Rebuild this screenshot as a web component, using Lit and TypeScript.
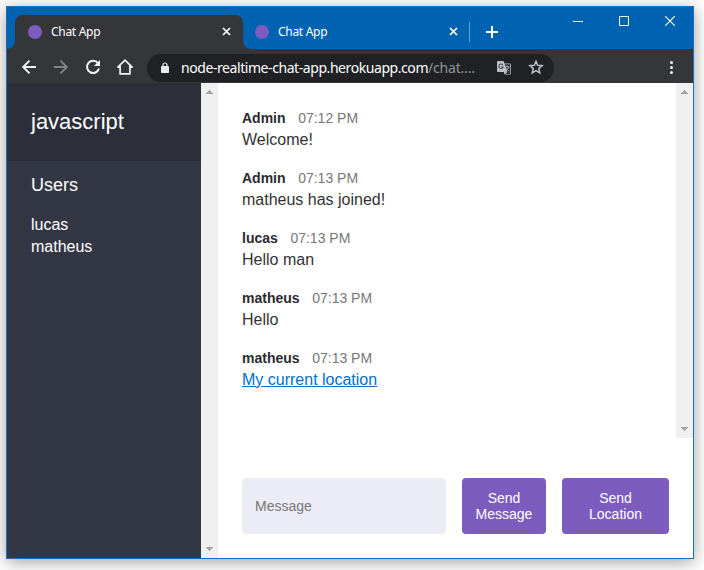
import { LitElement, html, css, svg } from "lit";
import { customElement, property } from "lit/decorators.js";

interface ChatMessage {
  user: string;
  time: string;
  text: string;
  link?: boolean;
}

const MESSAGES: ChatMessage[] = [
  { user: "Admin", time: "07:12 PM", text: "Welcome!" },
  { user: "Admin", time: "07:13 PM", text: "matheus has joined!" },
  { user: "lucas", time: "07:13 PM", text: "Hello man" },
  { user: "matheus", time: "07:13 PM", text: "Hello" },
  { user: "matheus", time: "07:13 PM", text: "My current location", link: true },
];

const USERS = ["lucas", "matheus"];

const closeGlyph = html`<svg class="tab-close" width="9" height="9" viewBox="0 0 9 9">
  <path d="M1 1L8 8M8 1L1 8" stroke="#fff" stroke-width="1.7" fill="none" />
</svg>`;

@customElement("scroll-track")
class ScrollTrack extends LitElement {
  static styles = css`
    :host {
      display: flex;
      flex-direction: column;
      justify-content: space-between;
      align-items: center;
      box-sizing: border-box;
      width: 17px;
      flex: none;
      padding: 7px 0;
      background: #f0f0f0;
    }
    svg {
      display: block;
    }
  `;
  render() {
    return html`
      <svg width="7" height="4" viewBox="0 0 7 4" shape-rendering="crispEdges">
        <path d="M3 0h1v1h1v1h1v1h1v1H0V3h1V2h1V1h1z" fill="#a3a3a3" />
      </svg>
      <svg width="7" height="4" viewBox="0 0 7 4" shape-rendering="crispEdges">
        <path d="M0 0h7v1H6v1H5v1H4v1H3V3H2V2H1V1H0z" fill="#a3a3a3" />
      </svg>
    `;
  }
}

@customElement("browser-chrome")
class BrowserChrome extends LitElement {
  static styles = css`
    :host {
      display: block;
      flex: none;
      font-family: "Noto Sans", "Open Sans", sans-serif;
      color: #fff;
    }
    svg {
      display: block;
      flex: none;
    }
    .tabs {
      display: flex;
      height: 42px;
      box-sizing: border-box;
      padding: 8px 0 0 8px;
      background: #0063b1;
    }
    .tab {
      position: relative;
      display: flex;
      align-items: center;
      box-sizing: border-box;
      height: 34px;
      padding-left: 13px;
      font-size: 12px;
    }
    .tab.active {
      width: 228px;
      background: #35363a;
      border-radius: 8px 8px 0 0;
    }
    .tab.active::before,
    .tab.active::after {
      content: "";
      position: absolute;
      bottom: 0;
      width: 8px;
      height: 8px;
    }
    .tab.active::before {
      left: -8px;
      background: radial-gradient(circle at 0 0, transparent 7.5px, #35363a 8.2px);
    }
    .tab.active::after {
      right: -8px;
      background: radial-gradient(circle at 100% 0, transparent 7.5px, #35363a 8.2px);
    }
    .tab.idle {
      width: 227px;
      padding-left: 12px;
    }
    .dot {
      width: 14px;
      height: 14px;
      border-radius: 50%;
      background: #7c5cbf;
      margin-right: 9px;
    }
    .tab-title {
      width: 171px;
      letter-spacing: -0.3px;
      line-height: 16px;
    }
    .tab-close {
      margin-top: -1px;
    }
    .divider {
      width: 1px;
      height: 20px;
      margin-top: 7px;
      margin-left: -1px;
      background: #5c9bd0;
    }
    .plus {
      margin: 11px 0 0 16px;
    }
    .controls {
      display: flex;
      align-items: center;
      height: 12px;
      gap: 36px;
      margin: 0 18px 0 auto;
    }
    .toolbar {
      display: flex;
      align-items: center;
      height: 34px;
      background: #35363a;
    }
    .nav {
      display: flex;
      align-items: center;
      gap: 16px;
      margin-left: 14px;
      margin-top: 2px;
    }
    .address {
      display: flex;
      align-items: center;
      box-sizing: border-box;
      width: 407px;
      height: 28px;
      margin: 3px 0 0 14px;
      padding-left: 14px;
      border-radius: 14px;
      background: #202124;
      font-size: 14px;
    }
    .url {
      width: 300px;
      margin-left: 12px;
      line-height: 20px;
      white-space: nowrap;
      letter-spacing: -0.43px;
    }
    .path {
      color: #8f9499;
      letter-spacing: -0.2px;
    }
    .translate {
      margin-left: 16px;
    }
    .star {
      margin-left: 17px;
      margin-top: -1px;
    }
    .menu {
      margin: 2px 20px 0 auto;
    }
  `;
  render() {
    return html`
      <div class="tabs">
        <div class="tab active">
          <span class="dot"></span><span class="tab-title">Chat App</span>${closeGlyph}
        </div>
        <div class="tab idle">
          <span class="dot"></span><span class="tab-title">Chat App</span>${closeGlyph}
        </div>
        <span class="divider"></span>
        <svg class="plus" width="12" height="12" viewBox="0 0 12 12">
          <path d="M6 0v12M0 6h12" stroke="#fff" stroke-width="2" />
        </svg>
        <div class="controls">
          <svg width="10" height="10" viewBox="0 0 10 10"><path d="M0 5.5h10" stroke="#fff" /></svg>
          <svg width="10" height="10" viewBox="0 0 10 10"><path d="M.5.5h9v9h-9z" fill="none" stroke="#fff" /></svg>
          <svg width="10" height="10" viewBox="0 0 10 10"><path d="M0 0l10 10M10 0L0 10" stroke="#fff" stroke-width="1.1" /></svg>
        </div>
      </div>
      <div class="toolbar">
        <div class="nav">
          <svg width="16" height="16" viewBox="0 0 16 16" fill="none" stroke="#f1f3f4" stroke-width="1.9">
            <path d="M15 8H2.5M8.5 1.7L2.2 8l6.3 6.3" />
          </svg>
          <svg width="16" height="16" viewBox="0 0 16 16" fill="none" stroke="#828387" stroke-width="1.9">
            <path d="M1 8h12.5M7.5 1.7L13.8 8l-6.3 6.3" />
          </svg>
          <svg width="16" height="16" viewBox="0 0 16 16">
            <path d="M13 4.2A6.1 6.1 0 1 0 14 9.5" fill="none" stroke="#f1f3f4" stroke-width="2" />
            <path d="M15 1v6H9z" fill="#f1f3f4" />
          </svg>
          <svg width="16" height="16" viewBox="0 0 16 16" fill="none" stroke="#f1f3f4" stroke-width="1.7">
            <path d="M.8 8.2L8 1.2l7.2 7M3.1 6.8v8h9.8v-8" />
            <path d="M.3 8.3h3M12.7 8.3h3" stroke-width="1.2" />
          </svg>
        </div>
        <div class="address">
          <svg width="8" height="12" viewBox="0 0 8 12">
            <path d="M2 5V3a2 2 0 0 1 4 0v2" fill="none" stroke="#e8eaed" stroke-width="1.2" />
            <rect y="4" width="8" height="7" rx=".8" fill="#e8eaed" />
          </svg>
          <span class="url">node-realtime-chat-app.herokuapp.com<span class="path">/chat....</span></span>
          <svg class="translate" width="14" height="14" viewBox="0 0 14 14">
            <path d="M1 0h5.5l1 2.5H13a.8.8 0 0 1 .8.8v9.5a.8.8 0 0 1-.8.8H7.7L6.6 11H1a1 1 0 0 1-1-1V1a1 1 0 0 1 1-1z" fill="#bdc1c6" />
            <path d="M7.9 3.2h5.2v9.7H8.5l1.7-2z" fill="#303134" />
            <path d="M5.9 4.1A2.2 2.2 0 1 0 6.1 6H4.1" fill="none" stroke="#4b4c50" stroke-width="1.1" />
            <path d="M8.2 5.8h4.3M10.2 4.7v1.1M11.7 6q-.7 2.4-2.6 3.8M8.8 7l3 3" fill="none" stroke="#bdc1c6" stroke-width=".8" />
          </svg>
          <svg class="star" width="16" height="16" viewBox="0 0 16 16" fill="none" stroke="#bdc1c6" stroke-width="1.5">
            <path d="M8 2.3l1.7 4 4.4.4-3.3 2.9 1 4.3L8 11.6l-3.8 2.3 1-4.3-3.3-2.9 4.4-.4z" />
          </svg>
        </div>
        <svg class="menu" width="3" height="13" viewBox="0 0 3 13" fill="#f1f3f4">
          ${[1.5, 6.5, 11.5].map((y) => svg`<circle cx="1.5" cy=${y} r="1.5" />`)}
        </svg>
      </div>
    `;
  }
}

@customElement("chat-message")
class ChatMessageItem extends LitElement {
  @property({ attribute: false }) message!: ChatMessage;
  static styles = css`
    :host {
      display: block;
      height: 44px;
      margin-bottom: 16px;
      color: #333;
    }
    .meta {
      display: flex;
      gap: 12.6px;
      font-size: 14px;
      line-height: 22px;
      height: 22px;
    }
    .name {
      font-weight: 700;
      color: #2b2b2f;
    }
    .time {
      color: #777;
    }
    .text {
      font-size: 16px;
      line-height: 22px;
    }
    a {
      color: #0070cc;
    }
  `;
  render() {
    const m = this.message;
    return html`
      <div class="meta"><span class="name">${m.user}</span><span class="time">${m.time}</span></div>
      <div class="text">${m.link ? html`<a href="#">${m.text}</a>` : m.text}</div>
    `;
  }
}

@customElement("app-root")
class AppRoot extends LitElement {
  static styles = css`
    :host {
      display: block;
      box-sizing: border-box;
      width: 704px;
      height: 570px;
      padding: 6px 10px 11px 6px;
      overflow: hidden;
      background: #fff;
      font-family: "Liberation Sans", Arial, sans-serif;
    }
    .window {
      display: flex;
      flex-direction: column;
      box-sizing: border-box;
      height: 553px;
      border: 1px solid #1a6fb8;
      box-shadow: 0 3px 16px rgba(0, 0, 0, 0.38);
    }
    .page {
      display: flex;
      flex: 1;
      min-height: 0;
      background: #fff;
    }
    .sidebar {
      width: 194px;
      flex: none;
      background: #333744;
      color: #fff;
    }
    .room {
      margin: 0;
      box-sizing: border-box;
      height: 78px;
      padding: 24px;
      background: #2c2f3a;
      font-weight: 400;
      font-size: 22px;
      line-height: 30px;
    }
    .users-title {
      margin: 12px 24px 17px;
      font-weight: 400;
      font-size: 18px;
      line-height: 24px;
    }
    .users {
      list-style: none;
      margin: 0;
      padding: 0 24px;
      font-size: 16px;
      line-height: 22px;
    }
    .main {
      display: flex;
      flex-direction: column;
      flex: 1;
    }
    .scroll {
      display: flex;
      height: 355px;
    }
    .messages {
      flex: 1;
      padding: 24px 24px 0;
    }
    .compose {
      display: flex;
      gap: 16px;
      margin: 40px 24px 24px;
      height: 56px;
    }
    input,
    button {
      box-sizing: border-box;
      margin: 0;
      font-family: inherit;
      font-size: 14px;
      border-radius: 4px;
    }
    input {
      width: 204px;
      border: 1px solid #eee;
      background: #ececf6;
      padding: 0 12px;
    }
    input::placeholder {
      color: #777;
    }
    button {
      border: 0;
      padding: 0 12px;
      background: #7c5cbf;
      color: #fff;
      line-height: 16px;
    }
    .send {
      width: 84px;
    }
    .locate {
      width: 107px;
      padding: 0 24px;
    }
  `;
  render() {
    return html`
      <div class="window">
        <browser-chrome></browser-chrome>
        <div class="page">
          <div class="sidebar">
            <h2 class="room">javascript</h2>
            <h3 class="users-title">Users</h3>
            <ul class="users">
              ${USERS.map((u) => html`<li>${u}</li>`)}
            </ul>
          </div>
          <scroll-track></scroll-track>
          <div class="main">
            <div class="scroll">
              <div class="messages">
                ${MESSAGES.map((m) => html`<chat-message .message=${m}></chat-message>`)}
              </div>
              <scroll-track></scroll-track>
            </div>
            <div class="compose">
              <input placeholder="Message" />
              <button class="send">Send Message</button>
              <button class="locate">Send Location</button>
            </div>
          </div>
        </div>
      </div>
    `;
  }
}
